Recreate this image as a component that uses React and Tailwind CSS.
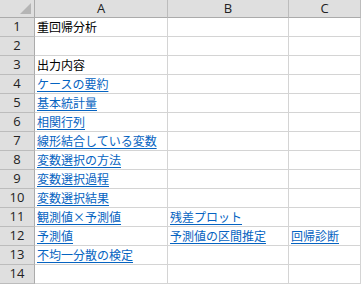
const rows = [
  ['重回帰分析', '', ''],
  ['', '', ''],
  ['出力内容', '', ''],
  [{ link: 'ケースの要約' }, '', ''],
  [{ link: '基本統計量' }, '', ''],
  [{ link: '相関行列' }, '', ''],
  [{ link: '線形結合している変数' }, '', ''],
  [{ link: '変数選択の方法' }, '', ''],
  [{ link: '変数選択過程' }, '', ''],
  [{ link: '変数選択結果' }, '', ''],
  [{ link: '観測値×予測値' }, { link: '残差プロット' }, ''],
  [{ link: '予測値' }, { link: '予測値の区間推定' }, { link: '回帰診断' }],
  [{ link: '不均一分散の検定' }, '', ''],
  ['', '', ''],
]

const widths = ['w-[133px]', 'w-[121px]', 'w-[72px]']

function Cell({ value, w }) {
  return (
    <div className={`${w} h-[19px] shrink-0 border-r border-b border-[#d4d4d4] bg-white pl-[2px] flex items-center overflow-visible whitespace-nowrap text-[12px] leading-none`}>
      {typeof value === 'object' ? (
        <span className="text-[#0563c1] underline underline-offset-[2px]">{value.link}</span>
      ) : (
        <span className="text-black">{value}</span>
      )}
    </div>
  )
}

export default function App() {
  return (
    <div className="w-[361px] h-[284px] overflow-hidden bg-white" style={{ fontFamily: '"Noto Sans CJK JP", "Liberation Sans", sans-serif' }}>
      {/* column headers */}
      <div className="flex h-[18px]">
        <div className="w-[35px] h-[18px] shrink-0 bg-[#dfdfdf] border-r border-b border-[#ababab] relative">
          <div className="absolute right-[3px] bottom-[3px] w-0 h-0 border-l-[11px] border-l-transparent border-b-[11px] border-b-[#b5b5b5]" />
        </div>
        {['A', 'B', 'C'].map((c, i) => (
          <div key={c} className={`${widths[i]} h-[18px] shrink-0 bg-[#dfdfdf] border-r border-r-[#bcbcbc] border-b border-b-[#ababab] flex items-center justify-center text-[13px] text-[#222]`} style={{ fontFamily: '"Open Sans", "Liberation Sans", sans-serif' }}>
            {c}
          </div>
        ))}
      </div>
      {rows.map((r, ri) => (
        <div key={ri} className="flex h-[19px]">
          <div className="w-[35px] h-[19px] shrink-0 bg-[#dfdfdf] border-r border-r-[#ababab] border-b border-b-[#bcbcbc] flex items-center justify-center text-[13px] text-[#222]" style={{ fontFamily: '"Open Sans", "Liberation Sans", sans-serif' }}>
            {ri + 1}
          </div>
          {r.map((v, ci) => (
            <Cell key={ci} value={v} w={widths[ci]} />
          ))}
        </div>
      ))}
    </div>
  )
}
